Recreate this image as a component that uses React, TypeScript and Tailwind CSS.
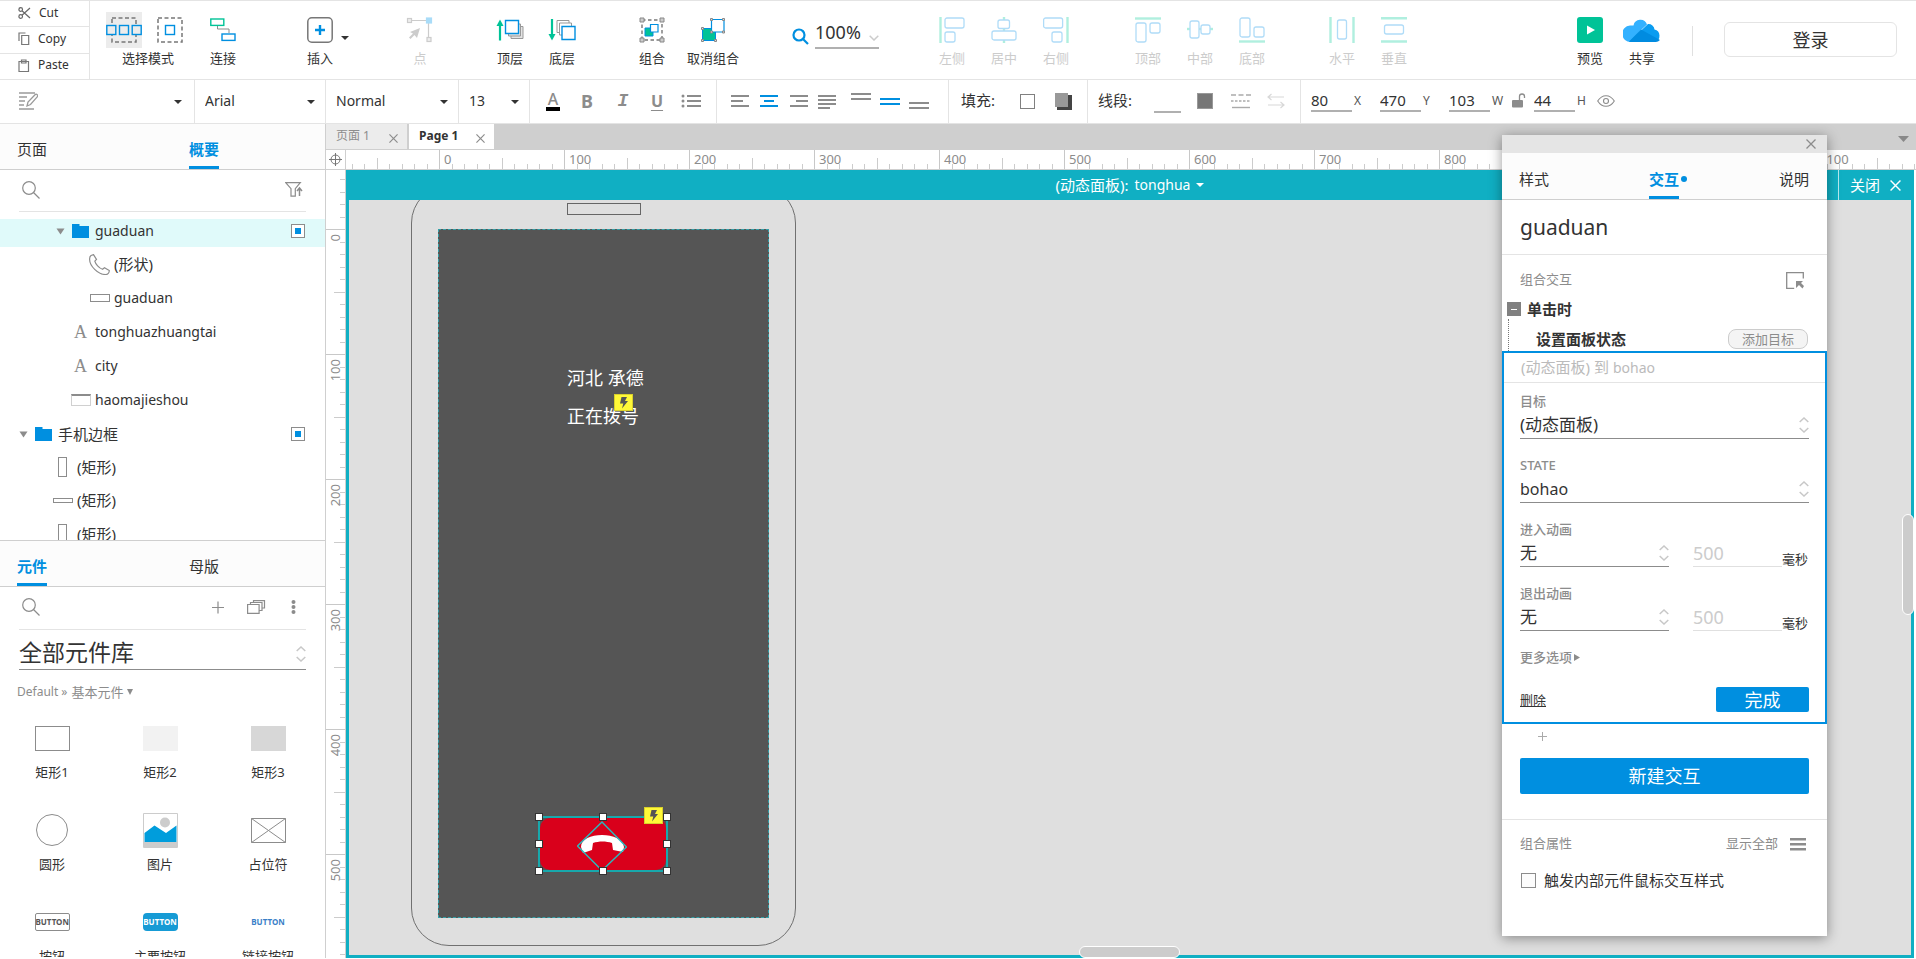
import { ReactNode } from "react";
import clsx from "clsx";

interface ToolProps {
  label: string;
  muted?: boolean;
  className?: string;
  children: ReactNode;
}

interface TreeItem {
  name: string;
  icon: ReactNode;
  pad: string;
  cjk?: boolean;
  open?: boolean;
  active?: boolean;
}

const GRAY = "#8c8c8c";
const BLUE = "#008fe0";
const GREEN = "#00c397";

const Tool = ({ label, muted, className, children }: ToolProps) => (
  <button
    className={clsx(
      "flex shrink-0 flex-col items-center",
      muted ? "text-[#cccccc]" : "text-[#333333]",
      className ?? "w-[52px]"
    )}
  >
    <span className="flex h-9 items-center">{children}</span>
    <span className="text-[13px] leading-5 whitespace-nowrap">{label}</span>
  </button>
);

const Caret = ({ className }: { className?: string }) => (
  <svg width="8" height="4" viewBox="0 0 8 4" className={className}>
    <path d="M0 0h8L4 4z" fill="currentColor" />
  </svg>
);

const Cross = ({ size = 9, className }: { size?: number; className?: string }) => (
  <svg width={size} height={size} viewBox="0 0 10 10" className={className}>
    <path d="M.5.5l9 9M9.500.5l-9 9" stroke="currentColor" strokeWidth="1.300" />
  </svg>
);

const UpDown = ({ className }: { className?: string }) => (
  <svg width="10" height="16" viewBox="0 0 10 16" fill="none" className={className}>
    <path d="M.7 5L5 1l4.300 4M.7 11L5 15l4.300-4" stroke="#c8c8c8" strokeWidth="1.500" />
  </svg>
);

const Search = () => (
  <svg width="18" height="18" viewBox="0 0 18 18" fill="none" stroke={GRAY} strokeWidth="1.200">
    <circle cx="7" cy="7" r="6.300" />
    <path d="M11.500 11.500l6 6" />
  </svg>
);

const Bolt = () => (
  <svg width="19" height="17" viewBox="0 0 19 17">
    <rect x=".5" y=".5" width="18" height="16" fill="#fff838" stroke="#d8d02c" />
    <path d="M7.500 3h5.500l-2 4h3l-6 7.500 1.300-5H6z" fill="#555555" />
  </svg>
);

/* ---------- top toolbar ---------- */

const SelectModes = () => (
  <span className="flex w-[84px] items-center gap-3.5">
    <span className="flex size-9 items-center justify-center bg-[#ececec]">
      <svg width="36" height="36" viewBox="0 0 36 36" fill="none">
        <rect x="6" y="6" width="24" height="24" stroke="#777777" strokeWidth="1.500" strokeDasharray="4 2.500" />
        <g fill="#ececec" stroke={BLUE} strokeWidth="1.400">
          <rect x=".8" y="13.500" width="9" height="9" />
          <rect x="13.500" y="13.500" width="9" height="9" />
          <rect x="26.200" y="13.500" width="9" height="9" />
        </g>
      </svg>
    </span>
    <svg width="28" height="28" viewBox="0 0 28 28" fill="none">
      <rect x="2" y="2" width="24" height="24" stroke="#777777" strokeWidth="1.500" strokeDasharray="4 2.500" />
      <rect x="9.500" y="9.500" width="9" height="9" stroke={BLUE} strokeWidth="1.400" />
    </svg>
  </span>
);

const ConnectIcon = () => (
  <svg width="26" height="26" viewBox="0 0 26 26" fill="none">
    <path d="M7.500 8.500v3.500h11.500v4" stroke="#8c8c8c" />
    <rect x=".8" y="2" width="13" height="6.400" stroke={GREEN} strokeWidth="1.400" />
    <rect x="12" y="17" width="13" height="6.400" stroke={BLUE} strokeWidth="1.400" />
  </svg>
);

const InsertIcon = () => (
  <svg width="26" height="26" viewBox="0 0 26 26" fill="none">
    <rect x=".8" y=".8" width="24.400" height="24.400" rx="4" stroke="#777777" strokeWidth="1.500" />
    <path d="M13 8v10M8 13h10" stroke={BLUE} strokeWidth="2.400" />
  </svg>
);

const PointIcon = () => (
  <svg width="28" height="26" viewBox="0 0 28 26" fill="none" stroke="#cccccc" strokeWidth="1.200">
    <path d="M5 3.500h17.500V21" />
    <rect x="1.500" y="1.500" width="4" height="4" fill="#eeeeee" />
    <rect x="20.500" y="1" width="5" height="5" fill="#a9dcf8" stroke="#a9dcf8" />
    <rect x="21" y="20.500" width="4" height="4" fill="#eeeeee" />
    <path d="M14 11L4 15l3 1.500-4 4 1.500 1.500 4-4L11 21z" fill="#cccccc" stroke="none" />
  </svg>
);

const FrontIcon = () => (
  <svg width="28" height="24" viewBox="0 0 28 24" fill="none">
    <path d="M4 22.500V5" stroke={GREEN} strokeWidth="2.200" />
    <path d="M.5 8L4 1.500 7.500 8z" fill={GREEN} />
    <g fill="#e4e4e4" stroke="#999999">
      <path d="M15 8.500h12v12H15z" />
      <path d="M12.500 6h12v12h-12z" />
    </g>
    <path d="M9.500 2.500h13v13h-13z" fill="#ffffff" stroke={BLUE} strokeWidth="1.400" />
  </svg>
);

const BackIcon = () => (
  <svg width="28" height="24" viewBox="0 0 28 24" fill="none">
    <path d="M4 1v17" stroke={GREEN} strokeWidth="2.200" />
    <path d="M.5 16h7L4 22.500z" fill={GREEN} />
    <g fill="#ffffff" stroke="#999999">
      <path d="M9 2.500h12v12H9z" />
      <path d="M11.500 5h12v12h-12z" />
    </g>
    <path d="M14 8.500h13v13H14z" fill="#ffffff" stroke={BLUE} strokeWidth="1.400" />
  </svg>
);

const GroupIcon = () => (
  <svg width="26" height="26" viewBox="0 0 26 26" fill="none">
    <path d="M3 3h20v20H3z" stroke="#777777" strokeWidth="1.400" strokeDasharray="3.500 2.500" />
    <path d="M6 11h8v8H6z" fill={GREEN} stroke={BLUE} />
    <path d="M11.500 7.500h7.500v7.500h-7.500z" fill="#ffffff" stroke={BLUE} strokeWidth="1.200" />
    <g fill="#cccccc" stroke="#888888">
      <path d="M1 1h4v4H1zM21 1h4v4h-4zM1 21h4v4H1zM21 21h4v4h-4z" />
    </g>
  </svg>
);

const UngroupIcon = () => (
  <svg width="26" height="26" viewBox="0 0 26 26" fill="none">
    <path d="M2.500 11.500h13v12h-13z" fill={GREEN} stroke={BLUE} />
    <path d="M11.500 2.500h12.500v12.500H11.500z" fill="#ffffff" stroke={BLUE} strokeWidth="1.200" />
    <g fill="#dddddd" stroke="#888888">
      <path d="M10.500 1.500h2v2h-2zM22.500 1.500h2v2h-2zM22.500 14h2v2h-2zM10.500 14h2v2h-2zM1.500 10.500h2v2h-2zM1.500 22.500h2v2h-2zM14.500 22.500h2v2h-2z" />
    </g>
  </svg>
);

const ALIGN = [
  {
    label: "左侧",
    bars: "M1.500 0v26",
    boxes: [[6, 1, 19, 10], [6, 15, 10, 10]],
    gap: "ml-[47px] w-[52px]",
  },
  {
    label: "居中",
    bars: "M13 0v26",
    boxes: [[7, 3, 11.5, 8.5], [1, 14, 24, 9]],
  },
  {
    label: "右侧",
    bars: "M24.500 0v26",
    boxes: [[0.6, 1, 19, 10], [9, 15, 10, 10]],
  },
  {
    label: "顶部",
    bars: "M0 1.500h26",
    boxes: [[1, 6, 10, 19], [15, 6, 10, 10]],
    gap: "ml-10 w-[52px]",
  },
  {
    label: "中部",
    bars: "M0 12h26",
    boxes: [[3, 4, 9, 17], [14, 8, 9, 9]],
  },
  {
    label: "底部",
    bars: "M0 24.500h26",
    boxes: [[1, 1, 10, 19], [15, 10, 10, 10]],
  },
  {
    label: "水平",
    bars: "M1.500 0v26M24.500 0v26",
    boxes: [[8.5, 3, 9, 19]],
    gap: "ml-[38px] w-[52px]",
  },
  {
    label: "垂直",
    bars: "M0 1.200h26M0 24.500h26",
    boxes: [[3.5, 8, 19, 9]],
  },
];

const ShareIcon = () => (
  <svg width="38" height="26" viewBox="0 0 38 26">
    <path d="M8 25a8 8 0 01-1-16.500h3.500A7 7 0 0124 7.500L17 14z" fill="#33b1ff" />
    <path d="M6 25L25 7a6 6 0 016.500 5.500A6.500 6.500 0 0132 25z" fill="#0a9cf0" />
    <path d="M6 24.500L18 12.500 37 23a6 6 0 01-5 2H8z" fill="#008be0" />
  </svg>
);

const TopBar = () => (
  <div className="flex h-20 shrink-0 border-y border-[#e4e4e4] bg-white">
    <div className="flex w-[90px] shrink-0 flex-col divide-y divide-[#e4e4e4] border-r border-[#e4e4e4] text-xs text-[#333333]">
      <button className="flex flex-1 items-center gap-2 pb-0.5 pl-[18px]">
        <svg width="13" height="12" viewBox="0 0 13 12" fill="none" stroke="#666666" strokeWidth="1.200">
          <circle cx="2.700" cy="2.500" r="1.800" />
          <circle cx="2.700" cy="9.500" r="1.800" />
          <path d="M4 3.800L12 11M4 8.200L12 1" />
        </svg>
        Cut
      </button>
      <button className="flex flex-1 items-center gap-2 pb-0.5 pl-[18px]">
        <svg width="12" height="13" viewBox="0 0 12 13" fill="none" stroke="#777777" strokeWidth="1.200">
          <path d="M1 9V1h6.500M3.700 3.500h7v9h-7z" />
        </svg>
        Copy
      </button>
      <button className="flex flex-1 items-center gap-2 pb-0.5 pl-[18px]">
        <svg width="12" height="13" viewBox="0 0 12 13" fill="none" stroke="#777777" strokeWidth="1.200">
          <path d="M1 2.500h9.500v10H1zM3.500 1h4.500v3H3.500z" />
        </svg>
        Paste
      </button>
    </div>
    <div className="flex flex-1 pt-[11px]">
      <Tool label="选择模式" className="ml-4 w-[84px]">
        <SelectModes />
      </Tool>
      <Tool label="连接" className="ml-[7px] w-[52px]">
        <ConnectIcon />
      </Tool>
      <Tool label="插入" className="ml-[50px] w-[42px]">
        <InsertIcon />
      </Tool>
      <Caret className="mt-6 text-[#333333]" />
      <Tool label="点" muted className="ml-[45px] w-[52px]">
        <PointIcon />
      </Tool>
      <Tool label="顶层" className="ml-[38px] w-[52px]">
        <FrontIcon />
      </Tool>
      <Tool label="底层">
        <BackIcon />
      </Tool>
      <Tool label="组合" className="ml-[38px] w-[52px]">
        <GroupIcon />
      </Tool>
      <Tool label="取消组合" className="ml-[9px] w-[52px]">
        <UngroupIcon />
      </Tool>
      <div className="ml-[53px] flex h-[37px] items-end gap-1.5">
        <svg width="17" height="17" viewBox="0 0 17 17" fill="none" stroke={BLUE} strokeWidth="2.200" className="mb-1">
          <circle cx="7" cy="7" r="5.500" />
          <path d="M11 11l5 5" />
        </svg>
        <label className="flex h-[33px] w-16 items-center justify-between border-b-2 border-[#b0b0b0]">
          <input aria-label="zoom" defaultValue="100%" className="w-[50px] text-lg leading-6 text-[#333333] outline-none" />
          <svg width="10" height="6" viewBox="0 0 10 6" fill="none" stroke="#cccccc" strokeWidth="1.500" className="mt-3">
            <path d="M.7.7L5 5 9.300.7" />
          </svg>
        </label>
      </div>
      {ALIGN.map(({ label, bars, boxes, gap }) => (
        <Tool key={label} label={label} muted className={gap}>
          <svg width="26" height="26" viewBox="0 0 26 26" fill="none">
            <path d={bars} stroke="#b0efdf" strokeWidth="2.400" />
            {boxes.map(([x, y, w, h]) => (
              <rect key={`${x}-${y}`} x={x} y={y} width={w} height={h} rx="2" fill="#ffffff" stroke="#b0dcf8" strokeWidth="1.300" />
            ))}
          </svg>
        </Tool>
      ))}
      <Tool label="预览" className="ml-auto w-[52px]">
        <svg width="26" height="26" viewBox="0 0 26 26">
          <rect width="26" height="26" rx="3" fill={GREEN} />
          <path d="M10 8.500l8 4.500-8 4.500z" fill="#ffffff" />
        </svg>
      </Tool>
      <Tool label="共享">
        <ShareIcon />
      </Tool>
      <div className="mt-3.5 ml-6 h-[30px] w-px bg-[#e0e0e0]" />
      <button className="mt-2.5 mr-[19px] ml-[31px] h-[35px] w-[173px] rounded-md border border-[#e4e4e4] text-lg leading-6 text-[#333333]">
        登录
      </button>
    </div>
  </div>
);

/* ---------- format toolbar ---------- */

const FormatSelect = ({ label, value, className }: { label: string; value: string; className: string }) => (
  <div className={clsx("relative flex shrink-0 items-center border-r border-[#e4e4e4]", className)}>
    <select aria-label={label} className="h-full w-full appearance-none px-2.5 pb-0.5 text-[#333333] outline-none">
      <option>{value}</option>
    </select>
    <Caret className="pointer-events-none absolute right-2.5 text-[#333333]" />
  </div>
);

const Lines = ({ d, color = "#8c8c8c", label, className }: { d: string; color?: string; label: string; className?: string }) => (
  <button aria-label={label} className={className}>
    <svg width="20" height="18" viewBox="0 0 20 18" stroke={color} strokeWidth="2">
      <path d={d} />
    </svg>
  </button>
);

const SizeField = ({ value, unit }: { value: string; unit: string }) => (
  <label className="flex items-center gap-0.5 text-[#555555]">
    <input defaultValue={value} className="h-[23px] w-[41px] border-b-2 border-[#b0b0b0] text-[15px] text-[#333333] outline-none" />
    <span className="w-3 text-xs">{unit}</span>
  </label>
);

const FormatBar = () => (
  <div className="flex h-11 shrink-0 border-b border-[#e4e4e4] bg-white text-sm">
    <div className="relative flex w-[195px] shrink-0 items-center border-r border-[#e4e4e4]">
      <select aria-label="style" className="h-full w-full appearance-none outline-none">
        <option></option>
      </select>
      <svg width="20" height="18" viewBox="0 0 20 18" fill="none" stroke="#9a9a9a" strokeWidth="1.300" className="pointer-events-none absolute top-3 left-[18px]">
        <path d="M1 1h16M1 5h8M1 9h6M1 13h5M1 17h15" />
        <path d="M9 14l1-4 7-7.300a1.500 1.500 0 012.200 2.200L12.500 12.500z" fill="#ffffff" />
      </svg>
      <Caret className="pointer-events-none absolute right-3 text-[#333333]" />
    </div>
    <FormatSelect label="font" value="Arial" className="w-[131px]" />
    <FormatSelect label="weight" value="Normal" className="w-[133px]" />
    <FormatSelect label="size" value="13" className="w-[71px]" />
    <div className="flex w-[187px] shrink-0 items-center border-r border-[#e4e4e4] pb-0.5 pl-4 text-lg leading-5 font-bold text-[#8c8c8c]">
      <button className="w-3.5 border-b-4 border-black text-base leading-4 font-medium">A</button>
      <button className="ml-[19px] w-4">B</button>
      <button className="ml-5 w-4 font-[Liberation_Mono] italic">I</button>
      <button className="ml-4.5 w-4 text-base leading-5 underline underline-offset-3">U</button>
      <button aria-label="list" className="ml-4">
        <svg width="20" height="14" viewBox="0 0 20 14" fill={GRAY}>
          <path d="M6 1h14v2H6zM6 6h14v2H6zM6 11h14v2H6z" />
          <circle cx="2" cy="2" r="1.500" />
          <circle cx="2" cy="7" r="1.500" />
          <circle cx="2" cy="12" r="1.500" />
        </svg>
      </button>
    </div>
    <div className="flex w-[232px] shrink-0 items-center border-r border-[#e4e4e4] pb-0.5 pl-[13px]">
      <Lines label="left" d="M1 4h18M1 9h12M1 14h18" />
      <Lines label="center" color={BLUE} d="M1 4h18M5 9h10M1 14h18" className="ml-[9px]" />
      <Lines label="right" d="M1 4h18M7 9h12M1 14h18" className="ml-2.5" />
      <Lines label="justify" d="M1 4h18M1 8h18M1 12h18M1 16h12" className="ml-2" />
      <Lines label="top" d="M0 2h20M0 7h20" className="ml-3.5" />
      <Lines label="middle" color={BLUE} d="M0 7h20M0 12h20" className="ml-[9px]" />
      <Lines label="bottom" d="M0 11h20M0 16h20" className="ml-[9px]" />
    </div>
    <div className="flex w-[139px] shrink-0 items-center border-r border-[#e4e4e4] pb-px pl-3 text-[15px] text-[#333333]">
      <span className="w-[59px]">填充:</span>
      <button aria-label="fill" className="size-[15px] border border-[#808080]" />
      <button aria-label="shadow" className="ml-5">
        <svg width="17" height="17" viewBox="0 0 17 17">
          <path d="M2 2h15v15H2z" fill="#444444" />
          <path d="M0 0h13v14H0z" fill="#999999" />
        </svg>
      </button>
    </div>
    <div className="flex w-[213px] shrink-0 items-center border-r border-[#e4e4e4] pb-px pl-2.5 text-[15px] text-[#333333]">
      <span className="w-[56px]">线段:</span>
      <input aria-label="line width" className="h-[23px] w-[27px] border-b-2 border-[#b0b0b0] outline-none" />
      <button aria-label="line color" className="ml-4 size-4 border border-[#999999] bg-[#777777]" />
      <svg width="20" height="16" viewBox="0 0 20 16" stroke="#aaaaaa" strokeWidth="1.400" className="ml-4.5">
        <path d="M0 2h20" strokeDasharray="5 2.500" />
        <path d="M0 8h20" strokeDasharray="2.500 1.500" />
        <path d="M1 14.500h18" />
      </svg>
      <svg width="18" height="16" viewBox="0 0 18 16" fill="none" stroke="#d8d8d8" strokeWidth="1.200" className="ml-4">
        <path d="M17 4H1M4.500 1L1 4l3.500 3M1 12h16M13.500 9l3.500 3-3.500 3" />
      </svg>
    </div>
    <div className="flex items-center pb-0.5 pl-2.5">
      <SizeField value="80" unit="X" />
      <span className="w-3.5" />
      <SizeField value="470" unit="Y" />
      <span className="w-3.5" />
      <SizeField value="103" unit="W" />
      <button aria-label="lock" className="mx-2">
        <svg width="14" height="15" viewBox="0 0 14 15" fill="none">
          <rect x="0" y="7" width="11" height="7.500" rx="1" fill="#8c8c8c" />
          <path d="M7.500 7V3.500a2.500 2.500 0 015 0V5" stroke="#8c8c8c" strokeWidth="1.300" />
        </svg>
      </button>
      <SizeField value="44" unit="H" />
      <svg width="18" height="12" viewBox="0 0 18 12" fill="none" stroke={GRAY} strokeWidth="1.100" className="ml-2">
        <path d="M.7 6C3 2.300 6 .7 9 .7S15 2.300 17.300 6C15 9.700 12 11.300 9 11.300S3 9.700.7 6z" />
        <circle cx="9" cy="6" r="2.500" />
      </svg>
    </div>
  </div>
);

/* ---------- left column ---------- */

const PanelTab = ({ name, on, className }: { name: string; on?: boolean; className?: string }) => (
  <button
    className={clsx(
      "box-border flex items-end border-b-3 pb-0.5 text-[15px] leading-[30px]",
      on ? "border-[#008fe0] font-bold text-[#008fe0]" : "border-transparent text-[#333333]",
      className
    )}
  >
    {name}
  </button>
);

const Folder = () => (
  <svg width="17" height="14" viewBox="0 0 17 14" fill={BLUE}>
    <path d="M0 0h7.500v2H17v12H0z" />
  </svg>
);

const Letter = () => <span className="w-[17px] pl-0.5 font-[Liberation_Serif] text-lg leading-5 text-[#8c8c8c]">A</span>;

const Frame = ({ className }: { className: string }) => <span className={clsx("border border-[#8c8c8c]", className)} />;

const TREE: TreeItem[] = [
  { name: "guaduan", icon: <Folder />, pad: "pl-[56px] pb-1", open: true, active: true },
  {
    name: "(形状)",
    cjk: true,
    pad: "pl-[89px] gap-1",
    icon: (
      <svg width="21" height="21" viewBox="0 0 21 21" fill="none" stroke={GRAY} strokeWidth="1.200">
        <path d="M2 1.500L4.500.6 7.500 5.500 5.800 7.200C6.500 10 10 14 13.500 15.300l2-1.600L20.300 16.500c0 2-1.500 4-3.800 4C9 20.500.5 12 .6 5 .6 3.500 1 2.200 2 1.500z" />
      </svg>
    ),
  },
  { name: "guaduan", icon: <Frame className="h-2 w-5" />, pad: "pl-[90px] gap-1" },
  { name: "tonghuazhuangtai", icon: <Letter />, pad: "pl-[72px] gap-1.5" },
  { name: "city", icon: <Letter />, pad: "pl-[72px] gap-1.5" },
  { name: "haomajieshou", icon: <span className="h-3 w-5 border border-t-2 border-[#d0d0d0] border-t-[#8c8c8c]" />, pad: "pl-[71px] gap-1" },
  { name: "手机边框", icon: <Folder />, pad: "pl-[19px]", cjk: true, open: true },
  { name: "(矩形)", icon: <Frame className="mr-1.5 h-5 w-[9px]" />, pad: "pl-[58px] gap-1 pb-0.5", cjk: true },
  { name: "(矩形)", icon: <Frame className="h-[5px] w-5" />, pad: "pl-[53px] gap-1 pb-1", cjk: true },
  { name: "(矩形)", icon: <Frame className="mr-1.5 h-5 w-[9px]" />, pad: "pl-[58px] gap-1 pb-1", cjk: true },
];

const Outline = () => (
  <section className="flex h-[417px] shrink-0 flex-col overflow-hidden border-b border-[#cfcfcf]">
    <div className="flex h-[46px] shrink-0 items-end border-b border-[#cfcfcf] bg-[#fcfcfc] pl-[17px]">
      <PanelTab name="页面" />
      <PanelTab name="概要" on className="ml-[142px]" />
    </div>
    <label className="mx-[19px] flex h-[42px] shrink-0 items-center border-b border-[#e4e4e4] pb-0.5 pl-[3px]">
      <Search />
      <input aria-label="search outline" className="min-w-0 flex-1 outline-none" />
      <svg width="18" height="15" viewBox="0 0 18 15" fill="none" stroke={GRAY} strokeWidth="1.200" className="mr-[3px]">
        <path d="M.7.7h14.600l-5 6v7.500H6V6.700z" />
        <path d="M14.500 14V6.500M12 9l2.500-3L17 9" strokeWidth="1.500" />
      </svg>
    </label>
    <ul className="mt-[7px] text-[#333333]">
      {TREE.map(({ name, icon, pad, cjk, open, active }, i) => (
        <li
          key={i}
          className={clsx(
            "flex items-center pr-5",
            active ? "h-7 bg-[#e0fafa]" : "h-[34px]",
            open && "gap-1.5",
            cjk ? "text-[15px]" : "text-sm",
            pad
          )}
        >
          {open && (
            <svg width="9" height="7" viewBox="0 0 9 7" className="mr-px">
              <path d="M.5.5h8l-4 6z" fill={GRAY} />
            </svg>
          )}
          {icon}
          <span className="leading-5">{name}</span>
          {open && (
            <span className="ml-auto flex size-3.5 items-center justify-center border border-[#8c8c8c] bg-white">
              <span className="size-1.5 bg-[#008fe0]" />
            </span>
          )}
        </li>
      ))}
    </ul>
  </section>
);

const WIDGETS = [
  { name: "矩形1", icon: <span className="h-[25px] w-[35px] border border-[#8c8c8c]" /> },
  { name: "矩形2", icon: <span className="h-[25px] w-[35px] bg-[#f2f2f2]" /> },
  { name: "矩形3", icon: <span className="h-[25px] w-[35px] bg-[#d7d7d7]" /> },
  { name: "圆形", icon: <span className="size-8 rounded-full border border-[#8c8c8c]" /> },
  {
    name: "图片",
    icon: (
      <svg width="35" height="35" viewBox="0 0 35 35">
        <path d="M.5.5h34v34H.5z" fill="#ffffff" stroke="#cccccc" />
        <path d="M1 29h33v5H1z" fill="#cccccc" />
        <circle cx="22" cy="9.500" r="5" fill="#cccccc" />
        <path d="M1.500 20L11.500 12.500 23 20 33.500 12.500V29h-32z" fill="#009ddc" />
      </svg>
    ),
  },
  {
    name: "占位符",
    icon: (
      <svg width="35" height="25" viewBox="0 0 35 25" fill="none" stroke="#8c8c8c">
        <path d="M.5.5h34v24H.5zM.5.5l34 24M34.500.5L.5 24.500" />
      </svg>
    ),
  },
  {
    name: "按钮",
    icon: <span className="w-[35px] rounded-xs border border-[#8c8c8c] text-center text-[8px] leading-4 font-bold text-[#555555]">BUTTON</span>,
  },
  {
    name: "主要按钮",
    icon: <span className="w-[35px] rounded-sm bg-[#169bd5] text-center text-[8px] leading-4.5 font-bold text-white">BUTTON</span>,
  },
  {
    name: "链接按钮",
    icon: <span className="text-[8px] leading-4 font-bold text-[#3a7fc8]">BUTTON</span>,
  },
];

const Library = () => (
  <section className="mb-px flex min-h-0 flex-1 flex-col overflow-hidden">
    <div className="flex h-[46px] shrink-0 items-end border-b border-[#cfcfcf] bg-[#fcfcfc] pl-[17px]">
      <PanelTab name="元件" on />
      <PanelTab name="母版" className="ml-[142px]" />
    </div>
    <label className="mx-[19px] flex h-[43px] shrink-0 items-center border-b border-[#e4e4e4] pb-0.5 pl-[3px]">
      <Search />
      <input aria-label="search library" className="min-w-0 flex-1 outline-none" />
      <svg width="86" height="14" viewBox="0 0 86 14" fill="none" stroke={GRAY} strokeWidth="1.200" className="mr-[9px]">
        <path d="M1 7.500h12M7 1.500v12" />
        <path d="M36.600 4.500h11.500v8.900H36.600zM39.500 4V2.500H51v8h-2.500M42.500 2V.6H53.500V8H51.500" />
        <g fill={GRAY} stroke="none">
          <circle cx="82.500" cy="2" r="2" />
          <circle cx="82.500" cy="7" r="2" />
          <circle cx="82.500" cy="12" r="2" />
        </g>
      </svg>
    </label>
    <div className="relative mx-[19px] mt-1 flex h-9 shrink-0 items-center border-b border-[#8c8c8c]">
      <select aria-label="library" className="w-full appearance-none text-[23px] leading-8 text-[#333333] outline-none">
        <option>全部元件库</option>
      </select>
      <UpDown className="pointer-events-none absolute top-3 right-0" />
    </div>
    <button className="mt-3 ml-[17px] flex shrink-0 items-center gap-1 text-xs leading-5 text-[#8c8c8c]">
      Default »<span className="text-[13px]">基本元件</span>
      <svg width="6" height="6" viewBox="0 0 6 6">
        <path d="M0 0h6L3 6z" fill="currentColor" />
      </svg>
    </button>
    <div className="mx-4 mt-[18px] grid w-[288px] grid-cols-[72px_72px_72px] justify-between gap-y-[30px]">
      {WIDGETS.map(({ name, icon }) => (
        <div key={name} className="flex flex-col items-center gap-1.5 text-[13px] leading-5 text-[#333333]">
          <span className="flex h-9 items-center">{icon}</span>
          <span>{name}</span>
        </div>
      ))}
    </div>
  </section>
);

/* ---------- canvas ---------- */

const H_MARKS = ["-100", "0", "100", "200", "300", "400", "500", "600", "700", "800", "900", "1000", "1100"];
const V_MARKS = ["-100", "0", "100", "200", "300", "400", "500"];
const STEPS = [1, 2, 3, 4, 5, 6, 7, 8, 9];

const TopRuler = () => (
  <div className="flex min-w-0 flex-1 overflow-hidden">
    <div className="-ml-8 flex">
      {H_MARKS.map((m) => (
        <div key={m} className="relative h-[19px] w-[125px] shrink-0 border-l border-[#c8c8c8] pl-1 text-[13px] leading-[18px] text-[#8c8c8c]">
          <svg width="125" height="19" viewBox="0 0 125 19" stroke="#cccccc" className="absolute top-0 left-0">
            {STEPS.map((s) => (
              <path key={s} d={`M${Math.round(s * 12.5) - 0.5} ${s === 5 ? 8 : 14}V19`} />
            ))}
          </svg>
          <span className="relative">{m}</span>
        </div>
      ))}
    </div>
  </div>
);

const SideRuler = () => (
  <div className="w-5 shrink-0 overflow-hidden border-r border-[#cfcfcf] bg-white">
    <div className="-mt-[66px] flex flex-col">
      {V_MARKS.map((m) => (
        <div key={m} className="relative h-[125px] w-[19px] shrink-0 border-t border-[#c8c8c8] pt-1 text-[13px] leading-[18px] text-[#8c8c8c]">
          <svg width="19" height="125" viewBox="0 0 19 125" stroke="#cccccc" className="absolute top-0 left-0">
            {STEPS.map((s) => (
              <path key={s} d={`M${s === 5 ? 8 : 14} ${Math.round(s * 12.5) - 0.5}H19`} />
            ))}
          </svg>
          <span className="relative block rotate-180 [writing-mode:vertical-rl]">{m}</span>
        </div>
      ))}
    </div>
  </div>
);

const HANDLES = [
  "left-0 top-0",
  "left-16 top-0",
  "left-32 top-0",
  "left-0 top-[27px]",
  "left-32 top-[27px]",
  "left-0 top-[54px]",
  "left-16 top-[54px]",
  "left-32 top-[54px]",
];

const Stage = () => (
  <div className="relative min-h-0 flex-1 overflow-hidden bg-[#dfdfdf]">
    <div className="absolute -top-[15px] left-[62px] h-[761px] w-[385px] rounded-[38px] border border-[#707070]" />
    <div className="absolute top-[3px] left-[218px] h-3 w-[74px] border border-[#666666]" />
    <div className="absolute top-[29px] left-[89px] h-[689px] w-[331px] border border-dashed border-[#33a0a8] bg-[#555555]" />
    <p className="absolute top-[165px] left-[218px] text-lg leading-[26px] text-white">河北 承德</p>
    <p className="absolute top-[203px] left-[218px] text-lg leading-[26px] text-white">正在拨号</p>
    <div className="absolute top-[194px] left-[265px]">
      <Bolt />
    </div>
    <div className="absolute top-[616px] left-[189px] h-14 w-[130px] border-2 border-[#18a8ac]">
      <div className="h-full rounded-[10px] bg-[#d9001b]" />
    </div>
    <svg width="50" height="50" viewBox="0 0 50 50" className="absolute top-[621px] left-[228px]">
      <path d="M4 26C4 18 14 14 25 14s21 4 22 12l-1 5-10-2-1-7c-6-2-13-2-19 0l-1 7-9 3z" fill="#ffffff" />
      <path d="M25 1L49.500 26 25 49.500.5 25z" fill="none" stroke="#28bcc0" strokeWidth="1.400" />
    </svg>
    {/* selection handles */}
    <div className="absolute top-[613px] left-[186px]">
      {HANDLES.map((h) => (
        <span key={h} className={clsx("absolute size-2 border border-[#333333] bg-white", h)} />
      ))}
    </div>
    <div className="absolute top-[607px] left-[295px]">
      <Bolt />
    </div>
  </div>
);

const Canvas = () => (
  <main className="flex min-w-0 flex-1 flex-col">
    <div className="flex h-[25px] shrink-0 bg-[#cfcfcf] text-xs">
      <button className="flex w-[81px] items-center justify-between bg-[#ececec] pr-[9px] pb-0.5 pl-2.5 text-[#8c8c8c]">
        页面 1<Cross className="mt-1.5" />
      </button>
      <button className="ml-0.5 flex w-[85px] items-center justify-between bg-white pr-[9px] pb-0.5 pl-2.5 font-bold text-[#333333]">
        Page 1<Cross className="mt-1.5 text-[#8c8c8c]" />
      </button>
      <svg width="11" height="6" viewBox="0 0 11 6" className="mt-3 mr-[7px] ml-auto">
        <path d="M0 0h11L5.500 6z" fill="#888888" />
      </svg>
    </div>
    <div className="flex h-[21px] shrink-0 border-y border-[#cfcfcf] bg-white">
      <div className="flex w-5 shrink-0 items-center justify-center border-r border-[#cfcfcf]">
        <svg width="13" height="13" viewBox="0 0 13 13" fill="none" stroke="#777777">
          <circle cx="6.500" cy="6.500" r="4.500" />
          <path d="M6.500 0v13M0 6.500h13" />
        </svg>
      </div>
      <TopRuler />
    </div>
    <div className="flex min-h-0 flex-1">
      <SideRuler />
      <div className="relative mr-0.5 flex min-w-0 flex-1 flex-col border-x-3 border-b-3 border-[#10afc3]">
        <div className="flex h-[30px] shrink-0 items-center bg-[#10afc3] pl-[73px] text-white">
          <button className="flex flex-1 items-center justify-center text-[15px]">
            (动态面板):<span className="mx-1.5 text-sm">tonghua</span>
            <Caret />
          </button>
          <button className="flex h-full w-[73px] items-center border-l border-white/70 pl-[11px] text-[15px]">
            关闭
            <Cross size={11} className="ml-2.5" />
          </button>
        </div>
        <Stage />
        {/* scrollbars */}
        <div className="absolute -bottom-[3px] left-[730px] h-3 w-[101px] rounded-md border border-white bg-[#cccccc]" />
        <div className="absolute top-[344px] -right-[3px] h-[101px] w-3 rounded-md border border-white bg-[#cccccc]" />
      </div>
    </div>
  </main>
);

/* ---------- interaction panel ---------- */

const Field = ({ label, value, cjk, className }: { label: string; value: string; cjk?: boolean; className?: string }) => (
  <label className={clsx("relative block", className)}>
    <span className="block text-[13px] leading-5 font-medium text-[#8c8c8c]">{label}</span>
    <select
      className={clsx(
        "block h-7 w-full appearance-none border-b border-[#8c8c8c] text-[#333333] outline-none",
        cjk ? "text-[17px]" : "text-base"
      )}
    >
      <option>{value}</option>
    </select>
    <UpDown className="pointer-events-none absolute right-0 bottom-1.5" />
  </label>
);

const Animate = ({ label }: { label: string }) => (
  <div className="mt-4 flex items-end">
    <Field label={label} value="无" cjk className="w-[149px]" />
    <label className="ml-6 flex items-end text-[13px] text-[#333333]">
      <input defaultValue="500" className="h-7 w-[89px] border-b border-[#e0e0e0] text-lg text-[#cccccc] outline-none" />
      <span className="leading-4 whitespace-nowrap">毫秒</span>
    </label>
  </div>
);

const Interactions = () => (
  <aside className="absolute top-[135px] right-[89px] w-[325px] bg-white pb-11 text-[#333333] shadow-[0_2px_12px_rgba(0,0,0,0.4)]">
    <div className="flex h-[18px] items-center justify-end bg-[#e5e5e5] pr-[11px] text-[#8c8c8c]">
      <Cross size={10} />
    </div>
    <div className="flex h-[47px] items-end justify-between border-b border-[#cfcfcf] bg-[#fcfcfc] pr-[18px] pl-[17px]">
      <PanelTab name="样式" />
      <div className="relative">
        <PanelTab name="交互" on />
        <span className="absolute top-3 -right-2 size-1.5 rounded-full bg-[#008fe0]" />
      </div>
      <PanelTab name="说明" />
    </div>
    <h2 className="flex h-[55px] items-center border-b border-[#e4e4e4] pt-0.5 pl-[18px] text-[21px]">guaduan</h2>
    <div className="flex h-11 items-center justify-between pt-1.5 pr-[23px] pl-[18px] text-[13px] text-[#8c8c8c]">
      组合交互
      <svg width="18" height="17" viewBox="0 0 18 17" fill="none">
        <path d="M17.300 6.500V.7H.7v15.600h7.500" stroke="#8c8c8c" strokeWidth="1.300" />
        <path d="M10 9h7l-2 2 3 3-1.500 2.500-3.500-3.500-3 3z" fill="#8c8c8c" />
      </svg>
    </div>
    <div className="flex h-5 items-center gap-1.5 pl-[5px] text-[15px] font-bold">
      <span className="flex size-3.5 items-center justify-center bg-[#808080]">
        <span className="h-px w-1.5 bg-white" />
      </span>
      单击时
    </div>
    <div className="ml-1.5 flex h-9 items-center justify-between border-l border-dotted border-[#777777] pt-1 pr-[19px] pl-[27px] text-[15px] font-bold">
      设置面板状态
      <button className="h-5 w-20 rounded-lg border border-[#cccccc] bg-[#f4f4f4] text-[13px] leading-4 font-normal text-[#8c8c8c]">添加目标</button>
    </div>
    <div className="relative -mt-1 border-2 border-[#008fe0] bg-white pb-2.5">
      <p className="flex h-[30px] items-center border-b border-[#e4e4e4] pl-[17px] text-[15px] text-[#bbbbbb]">
        (动态面板) 到<span className="ml-1 text-sm">bohao</span>
      </p>
      <div className="px-4 pt-2">
        <Field label="目标" value="(动态面板)" cjk />
        <Field label="STATE" value="bohao" className="mt-4" />
        <Animate label="进入动画" />
        <Animate label="退出动画" />
        <button className="mt-4 flex items-center gap-0.5 text-[13px] leading-5 font-medium text-[#8c8c8c]">
          更多选项
          <svg width="6" height="7" viewBox="0 0 6 7">
            <path d="M0 0l6 3.500L0 7z" fill="currentColor" />
          </svg>
        </button>
        <div className="mt-5 flex items-center justify-between">
          <a href="#delete" className="text-[13px] leading-5 underline">
            删除
          </a>
          <button className="h-[25px] w-[93px] rounded-xs bg-[#008fe0] text-lg leading-6 text-white">完成</button>
        </div>
      </div>
    </div>
    <button aria-label="add action" className="ml-9 flex h-6 items-center text-[#aaaaaa]">
      <svg width="9" height="9" viewBox="0 0 9 9" stroke="currentColor">
        <path d="M4.500 0v9M0 4.500h9" />
      </svg>
    </button>
    <div className="border-b border-[#e4e4e4] px-[18px] pt-2.5 pb-[25px]">
      <button className="block h-9 w-full rounded-xs bg-[#008fe0] text-lg text-white">新建交互</button>
    </div>
    <div className="flex h-12 items-center pr-[21px] pl-[18px] text-[13px] text-[#8c8c8c]">
      组合属性
      <button className="mr-3 ml-auto">显示全部</button>
      <svg width="16" height="13" viewBox="0 0 16 13" fill={GRAY}>
        <path d="M0 0h16v2.500H0zM0 5h16v2.500H0zM0 10h16v2.500H0z" />
      </svg>
    </div>
    <label className="ml-[19px] flex h-6 items-center gap-2 text-[15px]">
      <input type="checkbox" className="size-[15px] appearance-none border border-[#8c8c8c] bg-[#fcfcfc]" />
      触发内部元件鼠标交互样式
    </label>
  </aside>
);

const App = () => {
  return (
    <div className="relative flex h-screen flex-col overflow-hidden bg-white font-['Noto_Sans','Noto_Sans_CJK_SC',sans-serif]">
      <TopBar />
      <FormatBar />
      <div className="mb-px flex min-h-0 flex-1">
        <div className="flex w-[326px] shrink-0 flex-col border-r border-[#cfcfcf] bg-white">
          <Outline />
          <Library />
        </div>
        <Canvas />
      </div>
      <Interactions />
    </div>
  );
};

export default App;
